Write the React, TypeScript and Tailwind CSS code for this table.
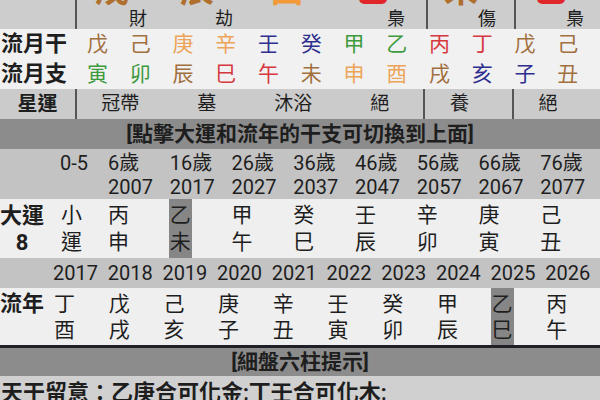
import React from 'react';

const colorOf: Record<string, string> = {
  甲: 'text-[#3d9a3d]', 乙: 'text-[#3d9a3d]', 寅: 'text-[#3d9a3d]', 卯: 'text-[#3d9a3d]',
  丙: 'text-[#d6383f]', 丁: 'text-[#d6383f]', 巳: 'text-[#d6383f]', 午: 'text-[#d6383f]',
  戊: 'text-[#a2703f]', 己: 'text-[#a2703f]', 辰: 'text-[#a2703f]', 戌: 'text-[#a2703f]', 丑: 'text-[#a2703f]', 未: 'text-[#a2703f]',
  庚: 'text-[#eca459]', 辛: 'text-[#eca459]', 申: 'text-[#eca459]', 酉: 'text-[#eca459]',
  壬: 'text-[#2e2e8f]', 癸: 'text-[#2e2e8f]', 亥: 'text-[#2e2e8f]', 子: 'text-[#2e2e8f]',
};

// top row: big pillar chars cut off by the row edge
const pillars = [
  { ch: '戊', color: 'text-[#b06f2c]', label: '財', cell: 'pl-[18px]', lab: 'ml-0' },
  { ch: '辰', color: 'text-[#b06f2c]', label: '劫', cell: 'pl-[16px]', lab: 'ml-[1px]' },
  { ch: '酉', color: 'text-[#f29a3a]', label: '', cell: 'pl-[19px]', lab: 'ml-0' },
  { ch: '巳', color: 'text-[#e0262a]', label: '梟', cell: 'pl-[17px]', lab: 'ml-[-2px]' },
  { ch: '未', color: 'text-[#b06f2c]', label: '傷', cell: 'pl-[16px] border-l-2 border-[#555]', lab: 'ml-0' },
  { ch: '巳', color: 'text-[#e0262a]', label: '梟', cell: 'pl-[17px] border-l-2 border-[#555]', lab: 'ml-[-1px]' },
];

const monthStems = ['戊', '己', '庚', '辛', '壬', '癸', '甲', '乙', '丙', '丁', '戊', '己'];
const monthBranches = ['寅', '卯', '辰', '巳', '午', '未', '申', '酉', '戌', '亥', '子', '丑'];

const daYun = [
  { age: '6歲', year: '2007', gz: ['丙', '申'] },
  { age: '16歲', year: '2017', gz: ['乙', '未'], on: true },
  { age: '26歲', year: '2027', gz: ['甲', '午'] },
  { age: '36歲', year: '2037', gz: ['癸', '巳'] },
  { age: '46歲', year: '2047', gz: ['壬', '辰'] },
  { age: '56歲', year: '2057', gz: ['辛', '卯'] },
  { age: '66歲', year: '2067', gz: ['庚', '寅'] },
  { age: '76歲', year: '2077', gz: ['己', '丑'] },
];

const liuNian = [
  { year: '2017', gz: ['丁', '酉'] },
  { year: '2018', gz: ['戊', '戌'] },
  { year: '2019', gz: ['己', '亥'] },
  { year: '2020', gz: ['庚', '子'] },
  { year: '2021', gz: ['辛', '丑'] },
  { year: '2022', gz: ['壬', '寅'] },
  { year: '2023', gz: ['癸', '卯'] },
  { year: '2024', gz: ['甲', '辰'] },
  { year: '2025', gz: ['乙', '巳'], on: true },
  { year: '2026', gz: ['丙', '午'] },
];

function GanZhi({ gz, on }: { gz: string[]; on?: boolean }) {
  return (
    <span className={`inline-flex flex-col h-full justify-center px-[1px] ${on ? 'bg-[#868686]' : ''}`}>
      <span>{gz[0]}</span>
      <span>{gz[1]}</span>
    </span>
  );
}

export default function App() {
  return (
    <div className="w-[600px] h-[400px] overflow-hidden bg-[#f0f0f0] text-[#1e1e1e] font-['Roboto','Noto_Sans_CJK_TC',sans-serif]">
      {/* top pillars */}
      <div className="grid grid-cols-[77px_87px_87px_87px_88px_88px_1fr] h-[29px] bg-[#cdcdcd] overflow-hidden">
        <div className="border-r-2 border-[#555]" />
        {pillars.map((p, i) => (
          <div key={i} className={`flex items-start overflow-hidden ${p.cell}`}>
            <span className={`w-[34px] shrink-0 text-center text-[34px] leading-[34px] font-bold mt-[-27px] ${p.color}`}>{p.ch}</span>
            {p.label && <span className={`text-[18px] leading-[18px] mt-[10px] ${p.lab}`}>{p.label}</span>}
          </div>
        ))}
      </div>

      {/* month rows */}
      {[{ label: '流月干', list: monthStems }, { label: '流月支', list: monthBranches }].map((r) => (
        <div key={r.label} className="grid grid-cols-[76px_repeat(12,42.75px)] h-[30px] items-center bg-[#f1f1f1]">
          <div className="pl-[1px] text-[22px] font-bold leading-none">{r.label}</div>
          {r.list.map((c, i) => (
            <div key={i} className={`text-center text-[21px] leading-none ${colorOf[c]}`}>{c}</div>
          ))}
        </div>
      ))}

      {/* star cycle */}
      <div className="grid grid-cols-[77px_86.5px_86.5px_86.5px_86.5px_89px_1fr] h-[30px] bg-[#cbcbcb] text-[19px] leading-[30px]">
        <div className="border-r-2 border-[#555] text-center text-[20px] font-bold">星運</div>
        <div className="text-center">冠帶</div>
        <div className="text-center">墓</div>
        <div className="text-center">沐浴</div>
        <div className="text-center">絕</div>
        <div className="border-l-2 border-[#555] text-center pr-[18px]">養</div>
        <div className="border-l-2 border-[#555] text-center pr-[18px]">絕</div>
      </div>

      <div className="h-[30px] bg-[#8c8c8c] text-center text-[21px] font-bold leading-[30px]">[點擊大運和流年的干支可切換到上面]</div>

      {/* da yun */}
      <div className="grid grid-cols-[58px_48px_repeat(8,1fr)] h-[50px] bg-[#c3c3c3] pt-[2px] text-[20px] leading-[24px]">
        <div />
        <div className="pl-[2px]">0-5</div>
        {daYun.map((d) => (
          <div key={d.year} className="pl-[2px]">
            <div>{d.age}</div>
            <div>{d.year}</div>
          </div>
        ))}
      </div>
      <div className="grid grid-cols-[58px_48px_repeat(8,1fr)] h-[59px] bg-[#efefef] text-[21px] leading-[27px]">
        <div className="w-[44px] flex flex-col justify-center text-center text-[22px] font-bold">
          <span>大運</span>
          <span>8</span>
        </div>
        <div className="pl-[2px]"><GanZhi gz={['小', '運']} /></div>
        {daYun.map((d) => (
          <div key={d.year} className="pl-[1px]"><GanZhi gz={d.gz} on={d.on} /></div>
        ))}
      </div>

      {/* liu nian */}
      <div className="grid grid-cols-[53px_repeat(10,1fr)] h-[30px] bg-[#c3c3c3] text-[20px] leading-[30px]">
        <div />
        {liuNian.map((y) => (
          <div key={y.year}>{y.year}</div>
        ))}
      </div>
      <div className="grid grid-cols-[53px_repeat(10,1fr)] h-[57px] bg-[#efefef] text-[21px] leading-[26px]">
        <div className="pt-[3px] text-[22px] font-bold">流年</div>
        {liuNian.map((y) => (
          <div key={y.year}><GanZhi gz={y.gz} on={y.on} /></div>
        ))}
      </div>

      <div className="h-[3px] bg-[#1f1f28]" />
      <div className="h-[28px] bg-[#8c8c8c] text-center text-[21px] font-bold leading-[28px]">[細盤六柱提示]</div>
      <div className="h-[25px] bg-[#d0d0d0] pl-[1px] pt-[4px] text-[22px] font-bold leading-[26px] whitespace-nowrap">天干留意：乙庚合可化金;丁壬合可化木;</div>
    </div>
  );
}
